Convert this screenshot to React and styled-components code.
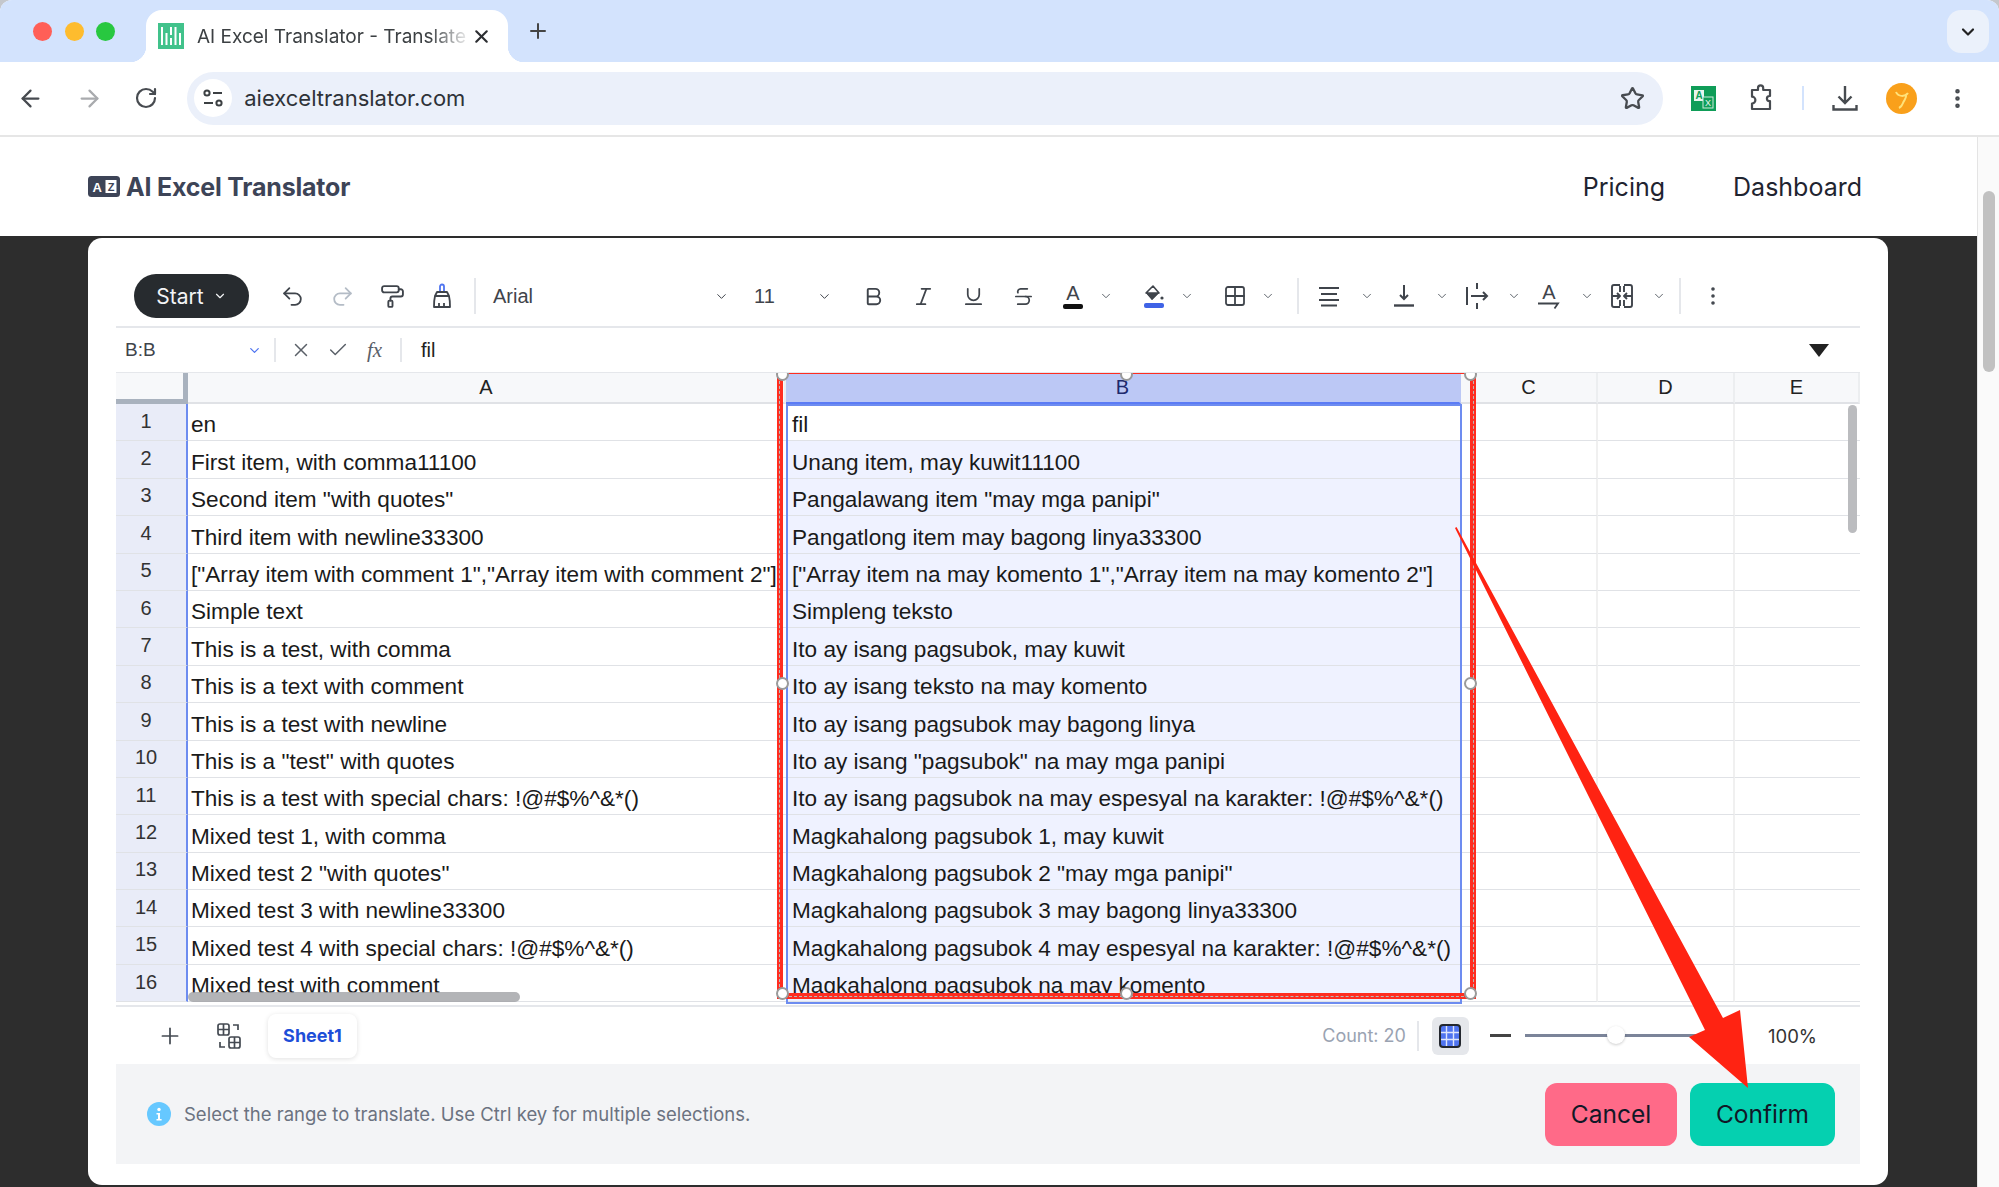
import React from "react";
import styled, { createGlobalStyle } from "styled-components";
import {
  ArrowLeft,
  ArrowRight,
  RotateCw,
  X,
  Plus,
  ChevronDown,
  Star,
  Undo2,
  Redo2,
  PaintRoller,
  Bold,
  Italic,
  Underline,
  Strikethrough,
  Grid2x2,
  Check,
  EllipsisVertical,
} from "lucide-react";

const UI_FONT = `Inter, "Liberation Sans", sans-serif`;
const CELL_FONT = `"Liberation Sans", Arial, sans-serif`;

const ROWS = [
  ["en", "fil"],
  ["First item, with comma11100", "Unang item, may kuwit11100"],
  ['Second item "with quotes"', 'Pangalawang item "may mga panipi"'],
  ["Third item with newline33300", "Pangatlong item may bagong linya33300"],
  [
    '["Array item with comment 1","Array item with comment 2"]',
    '["Array item na may komento 1","Array item na may komento 2"]',
  ],
  ["Simple text", "Simpleng teksto"],
  ["This is a test, with comma", "Ito ay isang pagsubok, may kuwit"],
  ["This is a text with comment", "Ito ay isang teksto na may komento"],
  ["This is a test with newline", "Ito ay isang pagsubok may bagong linya"],
  ['This is a "test" with quotes', 'Ito ay isang "pagsubok" na may mga panipi'],
  [
    "This is a test with special chars: !@#$%^&*()",
    "Ito ay isang pagsubok na may espesyal na karakter: !@#$%^&*()",
  ],
  ["Mixed test 1, with comma", "Magkahalong pagsubok 1, may kuwit"],
  ['Mixed test 2 "with quotes"', 'Magkahalong pagsubok 2 "may mga panipi"'],
  ["Mixed test 3 with newline33300", "Magkahalong pagsubok 3 may bagong linya33300"],
  [
    "Mixed test 4 with special chars: !@#$%^&*()",
    "Magkahalong pagsubok 4 may espesyal na karakter: !@#$%^&*()",
  ],
  ["Mixed test with comment", "Magkahalong pagsubok na may komento"],
];

const GlobalStyle = createGlobalStyle`
  html, body {
    margin: 0;
    padding: 0;
    background: #c4c7cc;
    overflow: hidden;
  }
  * { box-sizing: border-box; }
`;

const Window = styled.div`
  position: relative;
  width: 1999px;
  height: 1187px;
  display: flex;
  flex-direction: column;
  overflow: hidden;
  border-radius: 12px 12px 0 0;
  background: #fff;
  font-family: ${UI_FONT};
`;

const TabStrip = styled.div`
  height: 62px;
  background: #d3e3fd;
  display: flex;
  align-items: flex-end;
  padding-left: 33px;
`;

const Lights = styled.div`
  display: flex;
  gap: 12.5px;
  height: 52px;
  padding-top: 12px;
  margin-right: 31px;
`;

const Light = styled.span`
  width: 19px;
  height: 19px;
  border-radius: 50%;
  background: ${(props) => props.$color};
`;

const ActiveTab = styled.div`
  position: relative;
  width: 362px;
  height: 52px;
  background: #fff;
  border-radius: 16px 16px 0 0;
  display: flex;
  align-items: center;
  padding: 0 16px 0 12px;
  color: #3c4043;

  &::before,
  &::after {
    content: "";
    position: absolute;
    bottom: 0;
    width: 16px;
    height: 16px;
  }
  &::before {
    left: -16px;
    background: radial-gradient(circle at 0 0, transparent 16px, #fff 16.5px);
  }
  &::after {
    right: -16px;
    background: radial-gradient(circle at 100% 0, transparent 16px, #fff 16.5px);
  }
`;

const TabTitle = styled.span`
  flex: 1;
  margin-left: 13px;
  font-size: 19px;
  white-space: nowrap;
  overflow: hidden;
  -webkit-mask-image: linear-gradient(to right, #000 85%, transparent 100%);
  mask-image: linear-gradient(to right, #000 85%, transparent 100%);
`;

const NewTab = styled.span`
  display: flex;
  align-self: center;
  margin: 0 0 0 18px;
  color: #444;
`;

const TabMenu = styled.span`
  margin-left: auto;
  margin-right: 10px;
  margin-bottom: 9px;
  width: 42px;
  height: 43px;
  border-radius: 14px;
  background: #ebf1fb;
  display: flex;
  align-items: center;
  justify-content: center;
  color: #222;
`;

const BrowserBar = styled.div`
  height: 75px;
  background: #fff;
  border-bottom: 2px solid #e6e6e6;
  border-radius: 14px 14px 0 0;
  display: flex;
  align-items: center;
  padding-bottom: 1px;
`;

const NavIcon = styled.span`
  width: 56.5px;
  display: flex;
  justify-content: center;
  color: ${(props) => (props.$muted ? "#a9abae" : "#474b50")};
`;

const AddressBar = styled.div`
  margin-left: 13px;
  width: 1482px;
  height: 53px;
  border-radius: 27px;
  background: #ebf0fa;
  display: flex;
  align-items: center;
  padding: 0 18px 0 7px;
`;

const TuneCircle = styled.span`
  width: 38px;
  height: 38px;
  border-radius: 50%;
  background: #fff;
  display: flex;
  align-items: center;
  justify-content: center;
`;

const Url = styled.span`
  flex: 1;
  margin-left: 12px;
  font-size: 22px;
  color: #2e3238;
`;

const BarActions = styled.div`
  flex: 1;
  display: flex;
  align-items: center;
  color: #474b50;
`;

const BarSlot = styled.span`
  width: ${(props) => props.$w}px;
  display: flex;
  justify-content: center;
  align-items: center;
`;

const BarDivider = styled.span`
  width: 2px;
  height: 24px;
  background: #d3e3fd;
`;

const PageArea = styled.div`
  flex: 1;
  min-height: 0;
  display: flex;
`;

const PageBody = styled.div`
  flex: 1;
  min-width: 0;
  display: flex;
  flex-direction: column;
`;

const SiteNav = styled.header`
  height: 99px;
  background: #fff;
  display: flex;
  align-items: center;
  padding: 0 115px 0 88px;
`;

const Logo = styled.div`
  display: flex;
  align-items: center;
  gap: 6px;
  font-size: 25px;
  font-weight: 700;
  color: #3d4457;
  letter-spacing: -0.2px;
`;

const SiteLinks = styled.nav`
  margin-left: auto;
  display: flex;
  gap: 68px;
  font-size: 25px;
  color: #1f2430;
`;

const Backdrop = styled.main`
  flex: 1;
  min-height: 0;
  background: #2d2d2d;
  padding: 2px 89px 2px 88px;
  display: flex;
`;

const Modal = styled.section`
  flex: 1;
  background: #fff;
  border-radius: 14px;
  padding: 0 28px;
  display: flex;
  flex-direction: column;
`;

const PageScroll = styled.div`
  width: 22px;
  background: #fafafa;
  border-left: 1px solid #e4e4e4;
  padding: 54px 4px 0 5px;
`;

const PageThumb = styled.div`
  height: 181px;
  border-radius: 7px;
  background: #c1c1c1;
`;

const Toolbar = styled.div`
  height: 90px;
  padding: 36px 0 0 18px;
  border-bottom: 2px solid #e5e7eb;
  display: flex;
  align-items: flex-start;
  color: #3f444b;
`;

const StartButton = styled.button`
  width: 115px;
  height: 44px;
  border: 0;
  border-radius: 22px;
  background: #272b2f;
  color: #f3f4f6;
  font-family: ${UI_FONT};
  font-size: 21px;
  display: flex;
  align-items: center;
  justify-content: center;
  gap: 9px;
  margin-right: 18px;
`;

const ToolSlot = styled.span`
  width: 50px;
  height: 44px;
  display: flex;
  align-items: center;
  justify-content: center;
  color: ${(props) => (props.$muted ? "#b4bcc6" : "inherit")};
`;

const ToolGroup = styled.span`
  display: flex;
  align-items: center;
  height: 44px;
  margin-right: ${(props) => props.$after}px;
`;

const ToolChevron = styled.span`
  width: 16px;
  display: flex;
  justify-content: center;
  margin-left: ${(props) => props.$gap || 0}px;
  color: #555b63;
`;

const ToolDivider = styled.span`
  width: 2px;
  height: 36px;
  margin: 4px ${(props) => props.$right}px 0 ${(props) => props.$left}px;
  background: #e5e7eb;
`;

const Select = styled.span`
  width: ${(props) => props.$w}px;
  height: 44px;
  margin-right: ${(props) => props.$after}px;
  display: flex;
  align-items: center;
  justify-content: space-between;
  font-family: ${CELL_FONT};
  font-size: 20px;
  color: #3f444b;
`;

const ColorIcon = styled.span`
  display: flex;
  flex-direction: column;
  align-items: center;
  font-family: ${CELL_FONT};
  font-size: 20px;
  line-height: 20px;
`;

const ColorBar = styled.i`
  display: block;
  width: 20px;
  height: 5px;
  margin-top: 1px;
  border-radius: 2px;
  background: ${(props) => props.$color};
`;

const FormulaBar = styled.div`
  height: 44px;
  display: flex;
  align-items: center;
  padding-left: 9px;
  font-family: ${CELL_FONT};
  font-size: 19px;
  color: #3f444b;
`;

const NameBox = styled.span`
  width: 139px;
  display: flex;
  justify-content: space-between;
  align-items: center;
  padding-right: 2px;
`;

const FormulaDivider = styled.span`
  width: 2px;
  height: 24px;
  background: #e5e7eb;
  margin: 0 ${(props) => props.$right}px 0 ${(props) => props.$left}px;
`;

const FormulaSlot = styled.span`
  width: 37px;
  display: flex;
  justify-content: center;
  color: #5a6068;
`;

const Fx = styled.span`
  font-family: "Liberation Serif", serif;
  font-style: italic;
  font-size: 21px;
  color: #5a6068;
`;

const FormulaValue = styled.span`
  flex: 1;
  font-size: 20px;
  color: #222;
`;

const ExpandCaret = styled.span`
  width: 0;
  height: 0;
  margin-right: 31px;
  border-left: 10px solid transparent;
  border-right: 10px solid transparent;
  border-top: 13px solid #222;
`;

const SheetViewport = styled.div`
  position: relative;
  height: 635px;
  overflow: hidden;
  border-bottom: 2px solid #e5e7eb;
  border-top: 1px solid #e5e7eb;
`;

const Grid = styled.div`
  display: grid;
  grid-template-columns: 72px 598px 675px 137px 137px 125px;
  grid-template-rows: 31px repeat(16, 37.4px);
  font-family: ${CELL_FONT};
  font-size: 22.6px;
  color: #1a1a1a;
`;

const Corner = styled.div`
  background: #f7f8fa;
  border-right: 5px solid #a9b2be;
  border-bottom: 5px solid #a9b2be;
`;

const ColHead = styled.div`
  display: flex;
  align-items: center;
  justify-content: center;
  font-size: 20px;
  background: ${(props) => (props.$active ? "#bcc8f5" : "#f7f8fa")};
  color: ${(props) => (props.$active ? "#1e2a6e" : "#222")};
  border-right: 2px solid ${(props) => (props.$active ? "#bcc8f5" : "#eceef0")};
  border-bottom: 2px solid ${(props) => (props.$active ? "#5b7cf5" : "#e0e2e6")};
`;

const RowHead = styled.div`
  display: flex;
  align-items: center;
  justify-content: center;
  padding-bottom: 2px;
  padding-right: 10px;
  font-size: 20px;
  color: #333;
  background: #e9ecf8;
  border-right: 2px solid #6d8cf0;
  border-bottom: 1px solid #e0e2e6;
`;

const Cell = styled.div`
  display: flex;
  align-items: flex-end;
  padding: 0 0 2px ${(props) => props.$pad || 1}px;
  white-space: nowrap;
  overflow: hidden;
  background: ${(props) => props.$bg || "#fff"};
  border-bottom: 1px solid #e0e2e6;
  border-right: ${(props) => (props.$line ? "2px solid #f0f0f0" : "0")};
`;

const SelectionBox = styled.div`
  position: absolute;
  left: 670px;
  top: 31px;
  width: 676px;
  height: 600px;
  border: 2px solid #6d8cf0;
  pointer-events: none;
`;

const VScroll = styled.div`
  position: absolute;
  right: 3px;
  top: 32px;
  width: 9px;
  height: 128px;
  border-radius: 5px;
  background: #bbbcbf;
`;

const HScroll = styled.div`
  position: absolute;
  left: 72px;
  bottom: 3px;
  width: 332px;
  height: 10px;
  border-radius: 5px;
  background: rgba(160, 161, 165, 0.8);
`;

const RedFrame = styled.div`
  position: absolute;
  left: 660.5px;
  top: -5px;
  width: 699.5px;
  height: 631px;
  border: 6px solid #ff2d20;
  pointer-events: none;

  &::after {
    content: "";
    position: absolute;
    inset: -3.5px;
    border: 1px dashed #b9b9b9;
  }
`;

const Handle = styled.span`
  position: absolute;
  left: ${(props) => props.$x}%;
  top: ${(props) => props.$y}%;
  width: 13px;
  height: 13px;
  margin: -6.5px;
  border-radius: 50%;
  background: #fff;
  border: 2.5px solid #9a9a9a;
  z-index: 1;
`;

const SheetFooter = styled.div`
  height: 57px;
  display: flex;
  align-items: center;
  padding: 0 43px 0 30px;
`;

const FooterSlot = styled.span`
  width: 48px;
  margin-right: ${(props) => props.$after}px;
  display: flex;
  justify-content: center;
  color: #444a52;
`;

const SheetTab = styled.span`
  width: 89px;
  height: 44px;
  border-radius: 8px;
  display: flex;
  align-items: center;
  justify-content: center;
  background: #fff;
  box-shadow: 0 1px 5px rgba(0, 0, 0, 0.12);
  font-size: 18px;
  font-weight: 700;
  color: #1d4ed8;
`;

const Count = styled.span`
  margin-left: auto;
  font-size: 18px;
  color: #9aa3b2;
  padding-right: 11px;
  border-right: 2px solid #e5e7eb;
  line-height: 30px;
`;

const ViewButton = styled.span`
  width: 37px;
  height: 38px;
  margin-left: 13px;
  border-radius: 6px;
  background: #e5e7eb;
  display: flex;
  align-items: center;
  justify-content: center;
`;

const ZoomMinus = styled.span`
  width: 21px;
  height: 2.5px;
  margin: 0 14px 0 21px;
  background: #444;
`;

const ZoomTrack = styled.span`
  position: relative;
  width: 217px;
  height: 3px;
  background: #7b8499;
`;

const ZoomThumb = styled.span`
  position: absolute;
  left: 42%;
  top: -8px;
  width: 18px;
  height: 18px;
  margin-left: -9px;
  border-radius: 50%;
  background: #fff;
  box-shadow: 0 1px 3px rgba(0, 0, 0, 0.2);
`;

const ZoomValue = styled.span`
  margin-left: 26px;
  font-size: 18.5px;
  color: #333;
`;

const ActionBar = styled.div`
  height: 100px;
  background: #f3f4f6;
  display: flex;
  align-items: center;
  padding: 0 25px 0 31px;
`;

const Hint = styled.span`
  flex: 1;
  display: flex;
  align-items: center;
  gap: 13px;
  font-size: 18.5px;
  color: #6b7280;
`;

const ActionButton = styled.button`
  width: ${(props) => props.$w}px;
  height: 63px;
  margin-left: 13px;
  border: 0;
  border-radius: 12px;
  background: ${(props) => props.$bg};
  font-family: ${UI_FONT};
  font-size: 24.5px;
  color: #111827;
`;

const ArrowOverlay = styled.svg`
  position: absolute;
  left: 0;
  top: 0;
  pointer-events: none;
`;

const Favicon = () => (
  <svg width="26" height="26" viewBox="0 0 26 26">
    <rect width="26" height="26" fill="#41c28b" />
    <path
      d="M4 4v18M8.5 10v12M13 4v8M13 15v7M17.5 4v18M22 10v12"
      stroke="#fff"
      strokeWidth="2"
    />
  </svg>
);

const Tune = () => (
  <svg width="22" height="22" viewBox="0 0 22 22" fill="none" stroke="#3c4043" strokeWidth="2">
    <circle cx="5" cy="6" r="2.6" />
    <path d="M11 6h9M2 16h9" />
    <circle cx="17" cy="16" r="2.6" />
  </svg>
);

const TranslateExt = () => (
  <svg width="25" height="25" viewBox="0 0 25 25">
    <rect width="25" height="25" fill="#0f9d58" />
    <rect x="3" y="4" width="10" height="11" fill="#e8f5ee" />
    <text x="8" y="13" fontSize="10" fontWeight="700" fill="#0f9d58" textAnchor="middle" fontFamily="Liberation Sans">
      A
    </text>
    <rect x="12" y="11" width="10" height="11" fill="#0f9d58" stroke="#cfeadb" />
    <text x="17" y="20" fontSize="9" fill="#e8f5ee" textAnchor="middle" fontFamily="Liberation Sans">
      X
    </text>
  </svg>
);

const ExtPuzzle = () => (
  <svg width="28" height="28" viewBox="0 0 28 28" fill="none" stroke="#474b50" strokeWidth="2.2" strokeLinejoin="round">
    <path d="M5 6h6V4a2.6 2.6 0 0 1 5.2 0v2H23v6h-.5a2.6 2.6 0 0 0 0 5.2h.5V25H5v-5.5a3.4 3.4 0 0 0 0-6.8z" />
  </svg>
);

const DownloadTray = () => (
  <svg width="28" height="28" viewBox="0 0 28 28" fill="none" stroke="#474b50" strokeWidth="2.4">
    <path d="M14 2v17M7.5 12.5 14 19l6.5-6.5" />
    <path d="M2.5 21v4.5h23V21" />
  </svg>
);

const Avatar = () => (
  <svg width="31" height="31" viewBox="0 0 31 31">
    <circle cx="15.5" cy="15.5" r="15.5" fill="#f9a01b" />
    <path d="M10 9c2 5 9 5 12 1M20 11c1 5-2 6-3 9s-2 4-4 5" fill="none" stroke="#ffe27a" strokeWidth="2" />
  </svg>
);

const LogoMark = () => (
  <svg width="32" height="21" viewBox="0 0 32 21">
    <rect width="32" height="21" rx="3.5" fill="#3d4457" />
    <text x="9" y="16" fontSize="13" fontWeight="700" fill="#fff" textAnchor="middle" fontFamily="Liberation Sans">
      A
    </text>
    <rect x="17.5" y="4" width="11" height="13" fill="#fff" />
    <text x="23" y="15" fontSize="11" fontWeight="700" fill="#3d4457" textAnchor="middle" fontFamily="Liberation Sans">
      Z
    </text>
  </svg>
);

const Broom = () => (
  <svg width="24" height="26" viewBox="0 0 24 26" fill="none" stroke="#3f444b" strokeWidth="1.8" strokeLinejoin="round">
    <path d="M10 9V3.5a2 2 0 0 1 4 0V9" stroke="#4f74f0" />
    <path d="M7 9h10l2 4H5z" />
    <path d="M5 13c-1 4-1 8-1 11h16c0-3 0-7-1-11M9 24v-4M14 24v-4" />
  </svg>
);

const FillBucket = () => (
  <svg width="22" height="17" viewBox="0 0 22 17">
    <path d="M10 1 3 8l6 7 7-7z" fill="#3f444b" />
    <path d="M10 1 16 8H3z" fill="#fff" stroke="#3f444b" strokeWidth="1.6" strokeLinejoin="round" />
    <path d="M10 8h6l-7 7-6-7z" fill="#3f444b" />
    <circle cx="19" cy="13" r="1.6" fill="#3f444b" />
  </svg>
);

const AlignLines = () => (
  <svg width="22" height="22" viewBox="0 0 22 22" stroke="#3f444b" strokeWidth="2.2">
    <path d="M1 3h20M3 9h16M1 15h20M3 20.5h16" />
  </svg>
);

const VAlign = () => (
  <svg width="22" height="24" viewBox="0 0 22 24" fill="none" stroke="#3f444b" strokeWidth="2">
    <path d="M11 1v14M7 11l4 4 4-4" />
    <path d="M1 21.5h20" strokeWidth="2.4" />
  </svg>
);

const WrapIcon = () => (
  <svg width="24" height="28" viewBox="0 0 24 28" fill="none" stroke="#3f444b" strokeWidth="2">
    <path d="M2 5v18" />
    <path d="M12 1v6M12 21v6" />
    <path d="M6 14h16M18 10l4 4-4 4" />
  </svg>
);

const RotateIcon = () => (
  <svg width="24" height="8" viewBox="0 0 24 8" fill="none" stroke="#3f444b" strokeWidth="1.8">
    <path d="M1 1.5h20l-3.5 5" />
  </svg>
);

const MergeIcon = () => (
  <svg width="24" height="26" viewBox="0 0 24 26" fill="none" stroke="#3f444b" strokeWidth="1.9" strokeLinejoin="round">
    <path d="M10 3v6M10 17v6M14 3v6M14 17v6" />
    <path d="M10 2H4a2 2 0 0 0-2 2v18a2 2 0 0 0 2 2h6M14 2h6a2 2 0 0 1 2 2v18a2 2 0 0 1-2 2h-6" />
    <path d="M2 13h8M7 10l3 3-3 3M22 13h-8M17 10l-3 3 3 3" />
  </svg>
);

const SheetsIcon = () => (
  <svg width="24" height="26" viewBox="0 0 24 26" fill="none" stroke="#444a52" strokeWidth="1.7">
    <rect x="1" y="1" width="11" height="11" rx="2" />
    <path d="M6.5 1v11M1 6.5h11" />
    <rect x="12" y="14" width="11" height="11" rx="2" />
    <path d="M17.5 14v11M12 19.5h11" />
    <path d="M16 2h5v5M3 19v5h5" />
  </svg>
);

const GridView = () => (
  <svg width="22" height="24" viewBox="0 0 22 24">
    <rect x="1" y="1" width="20" height="22" rx="3" fill="#4f74f0" stroke="#23272e" strokeWidth="2" />
    <path d="M7.5 2v20M14.5 2v20M2 8.5h18M2 15.5h18" stroke="#dfe6fb" strokeWidth="1.4" />
  </svg>
);

const InfoIcon = () => (
  <svg width="24" height="24" viewBox="0 0 24 24">
    <circle cx="12" cy="12" r="12" fill="#66c8ff" />
    <circle cx="12" cy="7.5" r="1.7" fill="#fff" />
    <path d="M9.5 11H13v6h1.6v1.6H9.5V17H11v-4.400H9.500z" fill="#fff" />
  </svg>
);

const Chev = ({ size = 15 }) => <ChevronDown size={size} strokeWidth={1.6} />;

const App = () => {
  return (
    <>
      <GlobalStyle />
      <Window>
        <TabStrip>
          <Lights>
            <Light $color="#ff5f57" />
            <Light $color="#febc2e" />
            <Light $color="#28c840" />
          </Lights>
          <ActiveTab>
            <Favicon />
            <TabTitle>AI Excel Translator - Translate Excel</TabTitle>
            <X size={21} strokeWidth={2.4} color="#2b2d30" />
          </ActiveTab>
          <NewTab>
            <Plus size={24} strokeWidth={2} />
          </NewTab>
          <TabMenu>
            <ChevronDown size={20} strokeWidth={2.6} />
          </TabMenu>
        </TabStrip>

        <BrowserBar>
          <NavIcon style={{ width: 62 }}>
            <ArrowLeft size={27} strokeWidth={2} />
          </NavIcon>
          <NavIcon $muted>
            <ArrowRight size={27} strokeWidth={2} />
          </NavIcon>
          <NavIcon>
            <RotateCw size={24} strokeWidth={2.2} />
          </NavIcon>
          <AddressBar>
            <TuneCircle>
              <Tune />
            </TuneCircle>
            <Url>aiexceltranslator.com</Url>
            <Star size={25} strokeWidth={2.2} color="#474b50" />
          </AddressBar>
          <BarActions>
            <BarSlot $w={82}>
              <TranslateExt />
            </BarSlot>
            <BarSlot $w={32}>
              <ExtPuzzle />
            </BarSlot>
            <BarSlot $w={25} />
            <BarDivider />
            <BarSlot $w={82}>
              <DownloadTray />
            </BarSlot>
            <BarSlot $w={31}>
              <Avatar />
            </BarSlot>
            <BarSlot $w={82}>
              <EllipsisVertical size={25} strokeWidth={2.4} />
            </BarSlot>
          </BarActions>
        </BrowserBar>

        <PageArea>
          <PageBody>
            <SiteNav>
              <Logo>
                <LogoMark />
                AI Excel Translator
              </Logo>
              <SiteLinks>
                <span>Pricing</span>
                <span>Dashboard</span>
              </SiteLinks>
            </SiteNav>
            <Backdrop>
              <Modal>
                <Toolbar>
                  <StartButton>
                    Start
                    <ChevronDown size={14} strokeWidth={2} />
                  </StartButton>
                  <ToolSlot>
                    <Undo2 size={25} strokeWidth={1.7} />
                  </ToolSlot>
                  <ToolSlot $muted>
                    <Redo2 size={25} strokeWidth={1.7} />
                  </ToolSlot>
                  <ToolSlot>
                    <PaintRoller size={25} strokeWidth={1.8} />
                  </ToolSlot>
                  <ToolSlot>
                    <Broom />
                  </ToolSlot>
                  <ToolDivider $left={7} $right={17} />
                  <Select $w={236} $after={25}>
                    Arial
                    <Chev />
                  </Select>
                  <Select $w={78} $after={16}>
                    11
                    <Chev />
                  </Select>
                  <ToolSlot>
                    <Bold size={23} strokeWidth={2} />
                  </ToolSlot>
                  <ToolSlot>
                    <Italic size={23} strokeWidth={1.8} />
                  </ToolSlot>
                  <ToolSlot>
                    <Underline size={23} strokeWidth={1.8} />
                  </ToolSlot>
                  <ToolSlot>
                    <Strikethrough size={23} strokeWidth={1.8} />
                  </ToolSlot>
                  <ToolGroup $after={15}>
                    <ToolSlot>
                      <ColorIcon>
                        A
                        <ColorBar $color="#111" />
                      </ColorIcon>
                    </ToolSlot>
                    <ToolChevron>
                      <Chev size={14} />
                    </ToolChevron>
                  </ToolGroup>
                  <ToolGroup $after={15}>
                    <ToolSlot>
                      <ColorIcon>
                        <FillBucket />
                        <ColorBar $color="#3f63e6" />
                      </ColorIcon>
                    </ToolSlot>
                    <ToolChevron>
                      <Chev size={14} />
                    </ToolChevron>
                  </ToolGroup>
                  <ToolGroup $after={0}>
                    <ToolSlot>
                      <Grid2x2 size={24} strokeWidth={1.8} />
                    </ToolSlot>
                    <ToolChevron>
                      <Chev size={14} />
                    </ToolChevron>
                  </ToolGroup>
                  <ToolDivider $left={21} $right={5} />
                  <ToolGroup $after={0}>
                    <ToolSlot>
                      <AlignLines />
                    </ToolSlot>
                    <ToolChevron $gap={5}>
                      <Chev size={14} />
                    </ToolChevron>
                  </ToolGroup>
                  <ToolGroup $after={-2}>
                    <ToolSlot style={{ marginLeft: 4 }}>
                      <VAlign />
                    </ToolSlot>
                    <ToolChevron $gap={5}>
                      <Chev size={14} />
                    </ToolChevron>
                  </ToolGroup>
                  <ToolGroup $after={-2}>
                    <ToolSlot style={{ marginLeft: 4 }}>
                      <WrapIcon />
                    </ToolSlot>
                    <ToolChevron $gap={4}>
                      <Chev size={14} />
                    </ToolChevron>
                  </ToolGroup>
                  <ToolGroup $after={-2}>
                    <ToolSlot style={{ marginLeft: 4 }}>
                      <ColorIcon>
                        A
                        <RotateIcon />
                      </ColorIcon>
                    </ToolSlot>
                    <ToolChevron $gap={5}>
                      <Chev size={14} />
                    </ToolChevron>
                  </ToolGroup>
                  <ToolGroup $after={0}>
                    <ToolSlot style={{ marginLeft: 4 }}>
                      <MergeIcon />
                    </ToolSlot>
                    <ToolChevron $gap={4}>
                      <Chev size={14} />
                    </ToolChevron>
                  </ToolGroup>
                  <ToolDivider $left={12} $right={7} />
                  <ToolSlot>
                    <EllipsisVertical size={24} strokeWidth={1.6} />
                  </ToolSlot>
                </Toolbar>

                <FormulaBar>
                  <NameBox>
                    B:B
                    <ChevronDown size={15} strokeWidth={2} color="#4f74f0" />
                  </NameBox>
                  <FormulaDivider $left={10} $right={6} />
                  <FormulaSlot>
                    <X size={22} strokeWidth={1.6} />
                  </FormulaSlot>
                  <FormulaSlot>
                    <Check size={22} strokeWidth={1.6} />
                  </FormulaSlot>
                  <FormulaSlot>
                    <Fx>fx</Fx>
                  </FormulaSlot>
                  <FormulaDivider $left={7} $right={19} />
                  <FormulaValue>fil</FormulaValue>
                  <ExpandCaret />
                </FormulaBar>

                <SheetViewport>
                  <Grid>
                    <Corner />
                    <ColHead>A</ColHead>
                    <ColHead $active>B</ColHead>
                    <ColHead>C</ColHead>
                    <ColHead>D</ColHead>
                    <ColHead>E</ColHead>
                    {ROWS.map(([en, fil], i) => (
                      <React.Fragment key={en}>
                        <RowHead>{i + 1}</RowHead>
                        <Cell $pad={3}>{en}</Cell>
                        <Cell $pad={6} $bg={i === 0 ? "#fff" : "#eff2ff"}>
                          {fil}
                        </Cell>
                        <Cell $line />
                        <Cell $line />
                        <Cell />
                      </React.Fragment>
                    ))}
                  </Grid>
                  <SelectionBox />
                  <VScroll />
                  <HScroll />
                  <RedFrame>
                    <Handle $x={0} $y={0} />
                    <Handle $x={50} $y={0} />
                    <Handle $x={100} $y={0} />
                    <Handle $x={0} $y={50} />
                    <Handle $x={100} $y={50} />
                    <Handle $x={0} $y={100} />
                    <Handle $x={50} $y={100} />
                    <Handle $x={100} $y={100} />
                  </RedFrame>
                </SheetViewport>

                <SheetFooter>
                  <FooterSlot $after={11}>
                    <Plus size={26} strokeWidth={1.6} />
                  </FooterSlot>
                  <FooterSlot $after={15}>
                    <SheetsIcon />
                  </FooterSlot>
                  <SheetTab>Sheet1</SheetTab>
                  <Count>Count: 20</Count>
                  <ViewButton>
                    <GridView />
                  </ViewButton>
                  <ZoomMinus />
                  <ZoomTrack>
                    <ZoomThumb />
                  </ZoomTrack>
                  <ZoomValue>100%</ZoomValue>
                </SheetFooter>

                <ActionBar>
                  <Hint>
                    <InfoIcon />
                    Select the range to translate. Use Ctrl key for multiple selections.
                  </Hint>
                  <ActionButton $w={132} $bg="#ff6a88">
                    Cancel
                  </ActionButton>
                  <ActionButton $w={145} $bg="#05d0b0">
                    Confirm
                  </ActionButton>
                </ActionBar>
              </Modal>
            </Backdrop>
          </PageBody>
          <PageScroll>
            <PageThumb />
          </PageScroll>
        </PageArea>

        <ArrowOverlay width="1999" height="1187" viewBox="0 0 1999 1187">
          <polygon
            points="1455,528 1456.500,527 1723,1018 1740,1010 1748,1088 1689,1037 1705,1030"
            fill="#ff2312"
          />
        </ArrowOverlay>
      </Window>
    </>
  );
};

export default App;
